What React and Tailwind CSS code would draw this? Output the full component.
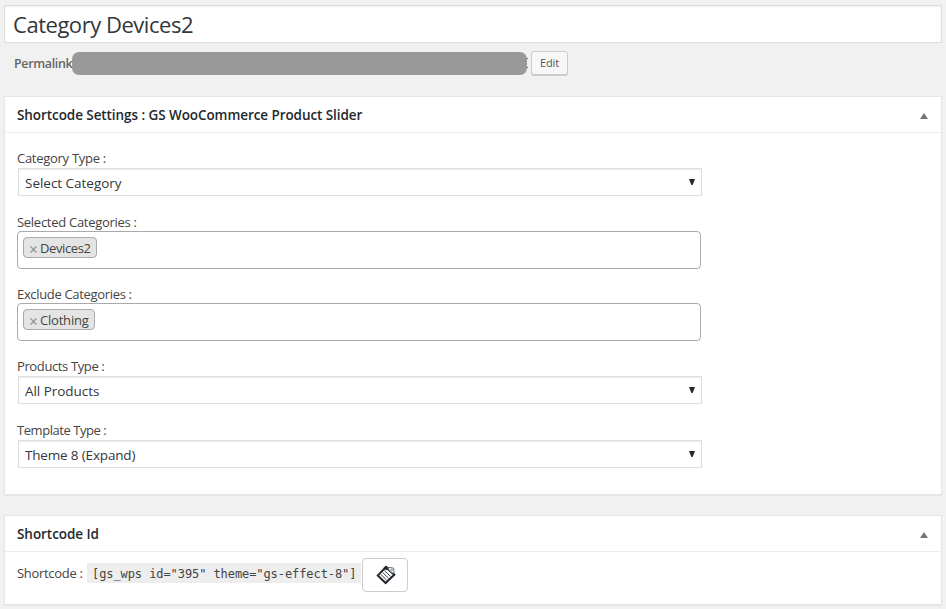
import React from "react";

function Panel({ title, titleClass, className, children }) {
  return (
    <section className={`border border-[#e5e5e5] bg-white shadow-[0_1px_1px_rgba(0,0,0,0.04)] ${className}`}>
      <header className="flex h-9 items-center justify-between border-b border-[#eeeeee] pl-3 pr-[13.5px]">
        <h2 className={`whitespace-nowrap font-semibold leading-5 text-[#23282d] ${titleClass}`}>{title}</h2>
        <svg className="mt-0.5 h-[6px] w-[8px]" viewBox="0 0 8 6" fill="#72777c">
          <path d="M4 0 8 6H0z" />
        </svg>
      </header>
      {children}
    </section>
  );
}

function SelectField({ label, labelClass, value, valueClass, className }) {
  return (
    <div className={className}>
      <div className={`h-[19px] whitespace-nowrap leading-[19px] ${labelClass}`}>{label}</div>
      <div className="ml-px flex h-7 w-[684px] items-center justify-between border border-[#dddddd] bg-white pl-1.5 pr-1.5 text-[#32373c] shadow-[inset_0_1px_2px_rgba(0,0,0,0.07)]">
        <span className={`mt-px whitespace-nowrap leading-5 ${valueClass}`}>{value}</span>
        <svg className="h-[6px] w-[6px]" viewBox="0 0 6 6" fill="#23282d">
          <path d="M0 0H6L3.6 6H2.4z" />
        </svg>
      </div>
    </div>
  );
}

function TagField({ label, labelClass, tag, tagClass, textClass, className }) {
  return (
    <div className={className}>
      <div className={`h-[18px] whitespace-nowrap leading-[18px] ${labelClass}`}>{label}</div>
      <div className="h-[38px] w-[684px] rounded-[4px] border border-[#aaaaaa] bg-white pl-[5px] pt-[5px]">
        <div className={`flex h-[21px] items-center rounded-[4px] border border-[#aaaaaa] bg-[#e4e4e4] pl-1.5 ${tagClass}`}>
          <svg className="mr-[3px] mt-[3px] h-[7px] w-[7px] shrink-0" viewBox="0 0 7 7" stroke="#999999" strokeWidth="1.4">
            <path d="M.6.6 6.4 6.4M6.4.6.6 6.4" />
          </svg>
          <span className={`whitespace-nowrap leading-5 ${textClass}`}>{tag}</span>
        </div>
      </div>
    </div>
  );
}

function ClipboardIcon() {
  return (
    <svg className="h-5 w-5" viewBox="0 0 20 20" fill="none">
      <path d="M9.8 2.2 1.8 10.4 9.6 18 18.2 9.8z" fill="#fff" stroke="#23282d" strokeWidth="2" />
      <path d="M4.6 9.2 10.8 15.3M6.5 7.4 12.7 13.4M8.4 5.6 14.6 11.5" stroke="#39404a" strokeWidth="1" />
      <path d="M11.5 2.2 17.6 3.1 18.3 8.8 14.2 6.6z" fill="#fff" stroke="#6b7078" strokeWidth="1" />
      <path d="M10 .6 12.6 3.1 10 5.2 7.4 3z" fill="#23282d" />
      <path d="M17 8 19.4 9.6 17.8 11.6z" fill="#23282d" />
      <circle cx="15.6" cy="5" r=".9" stroke="#6b7078" strokeWidth=".7" />
    </svg>
  );
}

export default function App() {
  return (
    <main className="h-[609px] w-[946px] overflow-hidden bg-[#f1f1f1] pl-1 pt-[5px] font-['Open_Sans',sans-serif] text-[13px] text-[#444444]">
      <div className="flex h-[38px] w-[938px] items-center border border-[#dddddd] bg-white pl-2 shadow-[inset_0_1px_2px_rgba(0,0,0,0.07)]">
        <h1 className="-mt-px whitespace-nowrap text-[22px] leading-8 tracking-[-0.47px] text-[#32373c]">Category Devices2</h1>
      </div>
      <div className="mt-2 flex h-6 items-center pl-2.5">
        <span className="mt-0.5 w-[58px] whitespace-nowrap text-[12.5px] font-semibold tracking-[-0.35px] text-[#666666]">Permalink</span>
        <div className="h-[23px] w-[455px] rounded-[7px] bg-[#999999]" />
        <div className="flex h-2.5 w-1 flex-col justify-between">
          <span className="h-px w-px bg-[#0073aa]" />
          <span className="h-px w-px bg-[#0073aa]" />
        </div>
        <button className="flex h-6 w-[37px] items-center justify-center rounded-[3px] border border-[#cccccc] bg-[#f7f7f7] text-[11px] tracking-[-0.1px] text-[#555555] shadow-[0_1px_0_#cccccc]">Edit</button>
      </div>

      <Panel title="Shortcode Settings : GS WooCommerce Product Slider" titleClass="text-[13.5px] tracking-[-0.075px]" className="mt-[21px] h-[399px] w-[938px]">
        <div className="px-3 pt-4">
          <SelectField label="Category Type :" labelClass="tracking-[-0.28px]" value="Select Category" valueClass="text-[13.5px] tracking-[-0.02px]" />
          <TagField label="Selected Categories :" labelClass="tracking-[-0.28px]" tag="Devices2" tagClass="w-[74px]" textClass="tracking-[-0.4px]" className="mt-[17px]" />
          <TagField label="Exclude Categories :" labelClass="tracking-[-0.33px]" tag="Clothing" tagClass="w-[72px]" textClass="tracking-[-0.2px]" className="mt-4" />
          <SelectField label="Products Type :" labelClass="tracking-[-0.38px]" value="All Products" valueClass="text-[13.5px] tracking-[-0.04px]" className="mt-4" />
          <SelectField label="Template Type :" labelClass="tracking-[-0.45px]" value="Theme 8 (Expand)" valueClass="text-[13.5px] tracking-[-0.17px]" className="mt-[17px]" />
        </div>
      </Panel>

      <Panel title="Shortcode Id" titleClass="text-[13.5px] tracking-[-0.05px]" className="mt-5 h-[90px] w-[938px]">
        <div className="flex pl-3 pt-1.5">
          <span className="mt-1.5 w-[70px] whitespace-nowrap leading-[19px] tracking-[-0.3px]">Shortcode :</span>
          <code className="mt-[5px] h-5 w-[274px] whitespace-pre bg-[#ededed] pl-[5px] font-['DejaVu_Sans_Mono',monospace] text-[12px] leading-[23px] tracking-[-0.08px]">[gs_wps id="395" theme="gs-effect-8"]</code>
          <button className="ml-px flex h-[34px] w-[46px] items-center justify-center rounded-[4px] border border-[#cccccc] bg-white pl-0.5" aria-label="Copy">
            <ClipboardIcon />
          </button>
        </div>
      </Panel>
    </main>
  );
}
